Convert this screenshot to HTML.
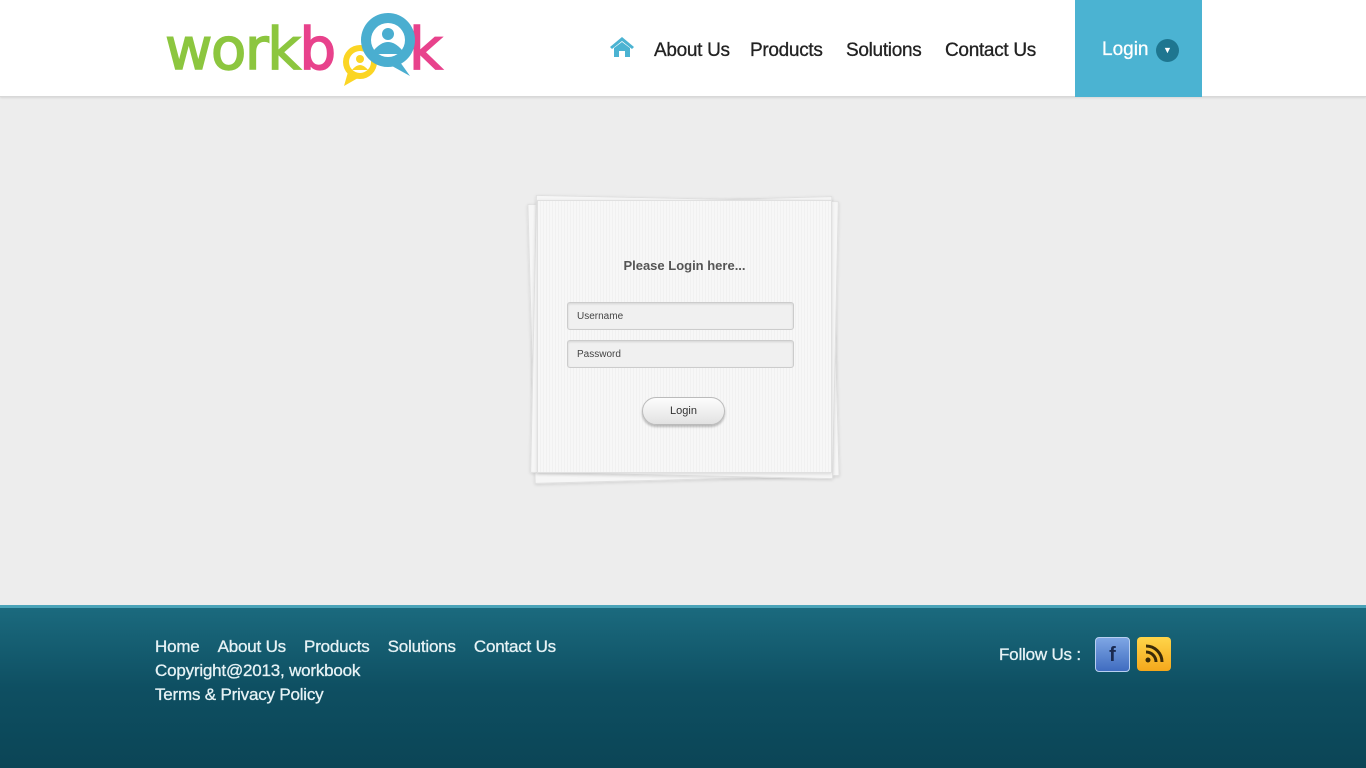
<!DOCTYPE html>
<html><head><meta charset="utf-8"><style>
*{margin:0;padding:0;box-sizing:border-box}
body{width:1366px;height:768px;overflow:hidden;background:#ededed;font-family:"Liberation Sans",sans-serif;position:relative}
.hdr{position:absolute;left:0;top:0;width:1366px;height:97px;background:#fff;border-bottom:1px solid #d8d8d8;box-shadow:0 1px 2px rgba(0,0,0,.1)}
.logo{position:absolute;left:165px;top:14px;font-size:58px;letter-spacing:-1.5px;font-family:"DejaVu Sans","Liberation Sans",sans-serif;line-height:70px;-webkit-text-stroke:1.5px currentColor}
.nav{position:absolute;top:40px;font-size:19px;color:#222;letter-spacing:-0.3px;-webkit-text-stroke:0.3px #222}
.loginbtn{position:absolute;left:1075px;top:0;width:127px;height:97px;background:#4bb3d2;color:#fff;font-size:19px}
.card{position:absolute;background:#f6f6f6;border:1px solid #e0e0e0;box-shadow:0 1px 3px rgba(0,0,0,.12)}
.inp{position:absolute;left:567px;width:227px;height:28px;border:1px solid #ccc;border-radius:3px;background:#f0f0f0;box-shadow:inset 0 1px 2px rgba(0,0,0,.12);font-size:10px;color:#444;padding:8px 9px}
.foot{position:absolute;left:0;top:605px;width:1366px;height:163px;background:linear-gradient(#1b6a7e,#0e4f62 50%,#0b4556);border-top:3px solid #4aa3b8}
.fl{position:absolute;color:#e6f2f5;font-size:17px;letter-spacing:-0.2px;-webkit-text-stroke:0.3px #e6f2f5}
</style></head><body>
<div class="hdr">
 <div class="logo"><span style="color:#8cc63f">work</span><span style="color:#e8428c">b</span></div>
 <div class="logo" style="left:409px;color:#e8428c">k</div>
 <svg style="position:absolute;left:330px;top:10px" width="90" height="80">
  <circle cx="30" cy="52" r="17" fill="#fbd524"/><path d="M18 62 L14 76 L28 68Z" fill="#fbd524"/>
  <circle cx="30" cy="52" r="11" fill="#fff"/><circle cx="30" cy="49" r="4" fill="#fbd524"/><path d="M22 60 q8-10 16 0z" fill="#fbd524"/>
  <circle cx="58" cy="30" r="27" fill="#4aaed0"/><path d="M70 52 L80 66 L62 56Z" fill="#4aaed0"/>
  <circle cx="58" cy="30" r="17" fill="#fff"/><circle cx="58" cy="24" r="6" fill="#4aaed0"/><path d="M44 40 q14-16 28 0 v4 h-28z" fill="#4aaed0"/>
 </svg>
 <svg style="position:absolute;left:609px;top:36px" width="26" height="22"><path d="M13 1 L1 11 L3 13 L13 5 L23 13 L25 11Z" fill="#4bb3d2"/><path d="M5 12 L13 6 L21 12 V21 H16 V15 H10 V21 H5Z" fill="#4bb3d2"/></svg>
 <div class="nav" style="left:654px">About Us</div>
 <div class="nav" style="left:750px">Products</div>
 <div class="nav" style="left:846px">Solutions</div>
 <div class="nav" style="left:945px">Contact Us</div>
 <div class="loginbtn"><span style="position:absolute;left:27px;top:39px;-webkit-text-stroke:0.3px #fff">Login</span>
  <span style="position:absolute;left:81px;top:39px;width:23px;height:23px;border-radius:50%;background:#1e7690;color:#fff;font-size:9px;text-align:center;line-height:23px">▼</span></div>
</div>
<div class="card" style="left:531px;top:200px;width:305px;height:280px;transform:rotate(-1.5deg)"></div>
<div class="card" style="left:533px;top:198px;width:303px;height:278px;transform:rotate(1.2deg)"></div>
<div class="card" style="left:537px;top:200px;width:295px;height:273px;background:repeating-linear-gradient(90deg,#f7f7f7 0 2px,#f1f1f1 2px 3px)"></div>
<div style="position:absolute;left:537px;width:295px;top:258px;text-align:center;font-size:13px;font-weight:bold;color:#555">Please Login here...</div>
<div class="inp" style="top:302px">Username</div>
<div class="inp" style="top:340px">Password</div>
<div style="position:absolute;left:642px;top:397px;width:83px;height:28px;border-radius:14px;border:1px solid #bbb;background:linear-gradient(#fdfdfd,#e2e2e2);box-shadow:0 2px 2px rgba(0,0,0,.25);font-size:11px;color:#333;text-align:center;line-height:26px">Login</div>
<div class="foot">
 <div class="fl" style="left:155px;top:29px;word-spacing:0">Home&nbsp;&nbsp;&nbsp;&nbsp;About Us&nbsp;&nbsp;&nbsp;&nbsp;Products&nbsp;&nbsp;&nbsp;&nbsp;Solutions&nbsp;&nbsp;&nbsp;&nbsp;Contact Us</div>
 <div class="fl" style="left:155px;top:53px">Copyright@2013, workbook</div>
 <div class="fl" style="left:155px;top:77px">Terms &amp; Privacy Policy</div>
 <div class="fl" style="left:999px;top:37px">Follow Us :</div>
 <div style="position:absolute;left:1095px;top:29px;width:35px;height:35px;border-radius:4px;border:1px solid #b8cff0;background:linear-gradient(#7ea6e4,#3f6cc0);color:#1a2a50;font-weight:bold;font-size:20px;text-align:center;line-height:34px">f</div>
 <div style="position:absolute;left:1137px;top:29px;width:34px;height:34px;border-radius:4px;background:linear-gradient(#ffd54a,#f4a81c)">
  <svg width="34" height="34"><circle cx="11" cy="23" r="2.5" fill="#3a2a08"/><path d="M9 15 a10 10 0 0 1 10 10" stroke="#3a2a08" stroke-width="3" fill="none"/><path d="M9 9 a16 16 0 0 1 16 16" stroke="#3a2a08" stroke-width="3" fill="none"/></svg></div>
</div>
</body></html>
